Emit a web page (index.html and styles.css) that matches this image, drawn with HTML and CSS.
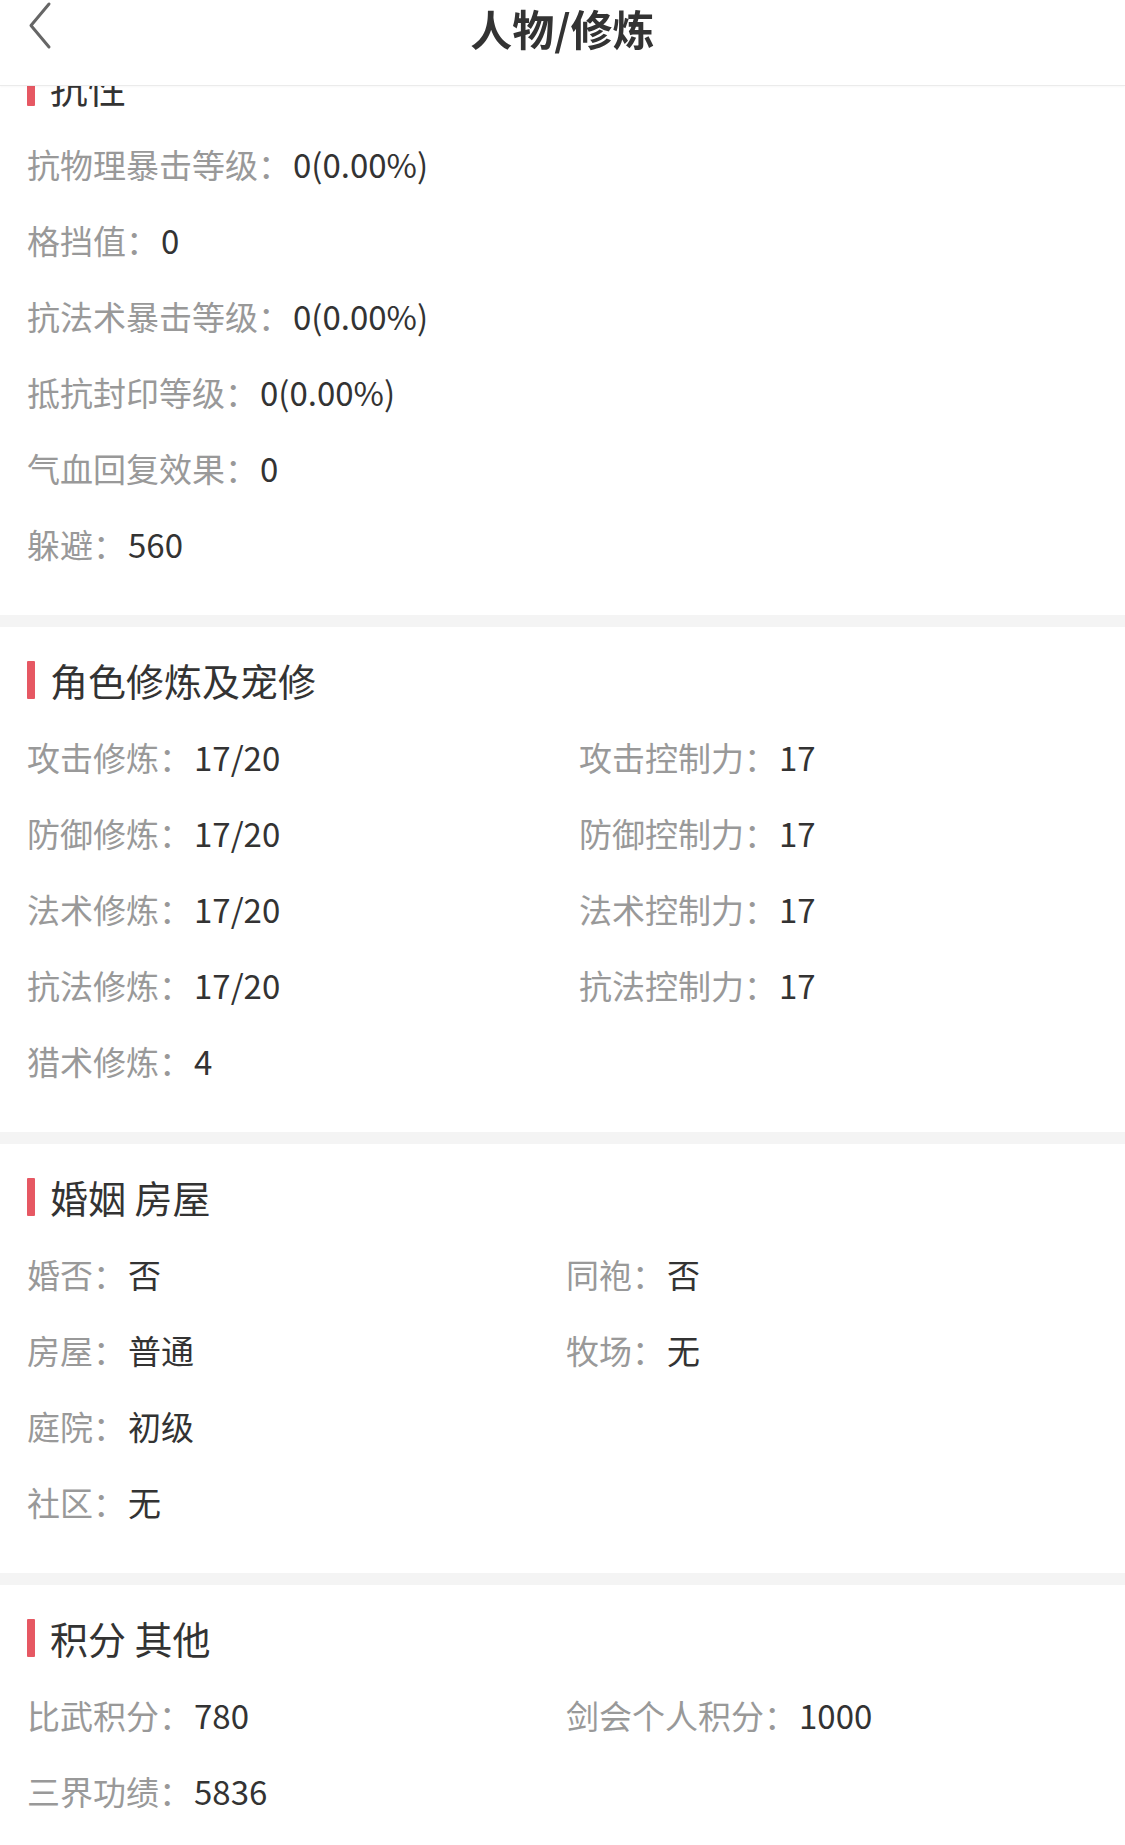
FILE: index.html
```html
<!DOCTYPE html>
<html lang="zh-CN">
<head>
    <meta charset="UTF-8">
    <meta name="viewport" content="width=device-width, initial-scale=1.0">
    <title>人物/修炼</title>
    <link rel="stylesheet" href="styles.css">
</head>
<body>

<div class="header">
    <a class="back" href="#">
        <svg width="24" height="50" viewBox="0 0 24 50">
            <polyline points="21,4 3,25.5 21,47" fill="none" stroke="#666" stroke-width="3" stroke-linecap="round" stroke-linejoin="round"/>
        </svg>
    </a>
    <div class="title">人物/修炼</div>
    <div></div>
</div>

<div class="content">
    <!-- 抗性 -->
    <div class="block">
        <h2 class="block-title">抗性</h2>
        <div class="stats">
            <p class="stat"><span class="label">抗物理暴击等级：</span><span class="value">0(0.00%)</span></p>
            <p class="stat"><span class="label">格挡值：</span><span class="value">0</span></p>
            <p class="stat"><span class="label">抗法术暴击等级：</span><span class="value">0(0.00%)</span></p>
            <p class="stat"><span class="label">抵抗封印等级：</span><span class="value">0(0.00%)</span></p>
            <p class="stat"><span class="label">气血回复效果：</span><span class="value">0</span></p>
            <p class="stat"><span class="label">躲避：</span><span class="value">560</span></p>
        </div>
    </div>

    <!-- 角色修炼及宠修 -->
    <div class="block">
        <h2 class="block-title">角色修炼及宠修</h2>
        <div class="stats two-cols wide">
            <p class="stat"><span class="label">攻击修炼：</span><span class="value">17/20</span></p>
            <p class="stat"><span class="label">攻击控制力：</span><span class="value">17</span></p>
            <p class="stat"><span class="label">防御修炼：</span><span class="value">17/20</span></p>
            <p class="stat"><span class="label">防御控制力：</span><span class="value">17</span></p>
            <p class="stat"><span class="label">法术修炼：</span><span class="value">17/20</span></p>
            <p class="stat"><span class="label">法术控制力：</span><span class="value">17</span></p>
            <p class="stat"><span class="label">抗法修炼：</span><span class="value">17/20</span></p>
            <p class="stat"><span class="label">抗法控制力：</span><span class="value">17</span></p>
            <p class="stat"><span class="label">猎术修炼：</span><span class="value">4</span></p>
        </div>
    </div>

    <!-- 婚姻 房屋 -->
    <div class="block">
        <h2 class="block-title">婚姻 房屋</h2>
        <div class="stats two-cols">
            <p class="stat"><span class="label">婚否：</span><span class="value">否</span></p>
            <p class="stat"><span class="label">同袍：</span><span class="value">否</span></p>
            <p class="stat"><span class="label">房屋：</span><span class="value">普通</span></p>
            <p class="stat"><span class="label">牧场：</span><span class="value">无</span></p>
            <p class="stat"><span class="label">庭院：</span><span class="value">初级</span></p>
            <p class="stat"></p>
            <p class="stat"><span class="label">社区：</span><span class="value">无</span></p>
        </div>
    </div>

    <!-- 积分 其他 -->
    <div class="block">
        <h2 class="block-title">积分 其他</h2>
        <div class="stats two-cols">
            <p class="stat"><span class="label">比武积分：</span><span class="value">780</span></p>
            <p class="stat"><span class="label">剑会个人积分：</span><span class="value">1000</span></p>
            <p class="stat"><span class="label">三界功绩：</span><span class="value">5836</span></p>
        </div>
    </div>
</div>

</body>
</html>
```

FILE: styles.css
```css
/* Estilos base */
body {
    font-family: "Noto Sans CJK SC", "Noto Sans", sans-serif;
    margin: 0;
    padding: 0;
    background-color: #f4f4f4;
    color: #333;
}

/* Barra superior fija, tapa el contenido al hacer scroll */
.header {
    position: fixed;
    top: 0;
    left: 0;
    right: 0;
    height: 85px;
    background-color: #fff;
    border-bottom: 1px solid #ebebeb;
    box-shadow: 0 1px 2px rgba(0, 0, 0, 0.03);
    display: grid;
    grid-template-columns: 1fr auto 1fr;
    align-items: start;
    z-index: 10;
}

.back {
    display: block;
    width: 24px;
    height: 50px;
    margin-left: 28px;
}

.back svg {
    display: block;
}

.title {
    margin-top: 7px;
    font-size: 42px;
    font-weight: 700;
    line-height: 42px;
    color: #333;
}

.content {
    padding-top: 34px;
}

.block {
    background-color: #fff;
    margin-bottom: 12px;
    padding: 31px 27px 33px;
}

.block-title {
    display: flex;
    align-items: center;
    margin: 0 0 17px;
    height: 44px;
    font-size: 38px;
    font-weight: 400;
    line-height: 44px;
    color: #333;
}

/* barrita roja delante del título */
.block-title::before {
    content: "";
    width: 8px;
    height: 38px;
    margin-right: 15px;
    background-color: #e65863;
    border-radius: 1px;
}

.stats {
    display: grid;
    grid-template-columns: 1fr;
}

.two-cols {
    grid-template-columns: 539px 1fr;
}

.two-cols.wide {
    grid-template-columns: 552px 1fr;
}

.stat {
    margin: 0;
    height: 76px;
    font-size: 33px;
    line-height: 76px;
    white-space: nowrap;
}

.label {
    color: #999;
}

.value {
    margin-left: 2px;
    color: #333;
}
```
